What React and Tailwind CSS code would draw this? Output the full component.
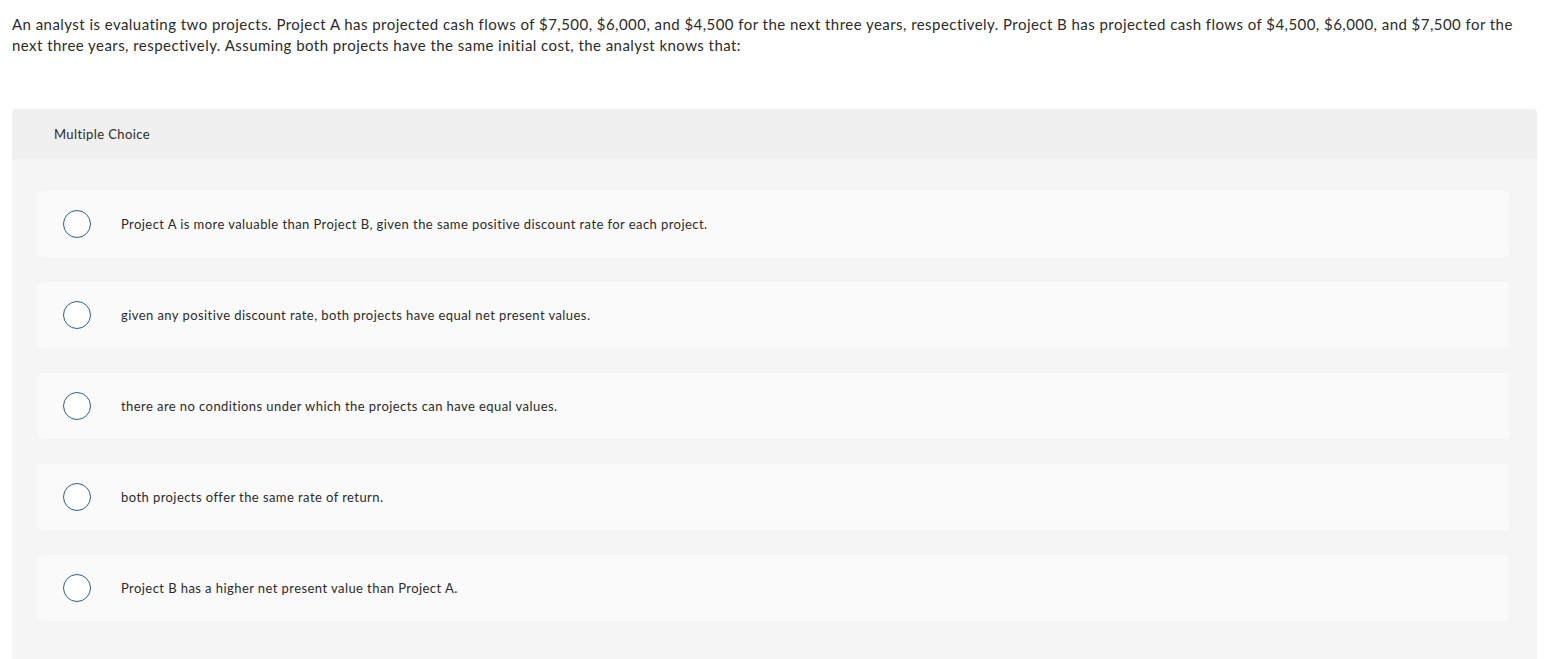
import React from 'react';

const options = [
  'Project A is more valuable than Project B, given the same positive discount rate for each project.',
  'given any positive discount rate, both projects have equal net present values.',
  'there are no conditions under which the projects can have equal values.',
  'both projects offer the same rate of return.',
  'Project B has a higher net present value than Project A.',
];

export default function App() {
  return (
    <div className="min-h-screen bg-white text-[#2b2b2b]" style={{ fontFamily: 'Lato, "Open Sans", sans-serif' }}>
      <div className="px-3 pt-[14px]">
        <p className="text-[15px] leading-[21px] tracking-[0.45px] pr-[14px]">
          An analyst is evaluating two projects. Project A has projected cash flows of $7,500, $6,000, and $4,500 for the next three years, respectively. Project B has projected cash flows of $4,500, $6,000, and $7,500 for the next three years, respectively. Assuming both projects have the same initial cost, the analyst knows that:
        </p>

        <div className="mt-[53px] mr-[-3px] rounded-t-[4px] overflow-hidden">
          <div className="h-[50px] bg-[#f0f0f0] flex items-center pl-[42px] pt-[2px]">
            <span className="text-[13px] tracking-[0.4px]">Multiple Choice</span>
          </div>
          <div className="bg-[#f5f5f5] pt-[32px] pb-[40px] pl-[26px] pr-[28px] flex flex-col gap-[25px]">
            {options.map((text) => (
              <label key={text} className="h-[66px] bg-[#fafafa] rounded-[4px] flex items-center cursor-pointer">
                <span className="ml-[25px] w-[28px] h-[28px] rounded-full border-[1.5px] border-[#2d5f8e] bg-white shrink-0" />
                <span className="ml-[30px] pt-[1px] text-[13px] tracking-[0.43px]">{text}</span>
              </label>
            ))}
          </div>
        </div>
      </div>
    </div>
  );
}
